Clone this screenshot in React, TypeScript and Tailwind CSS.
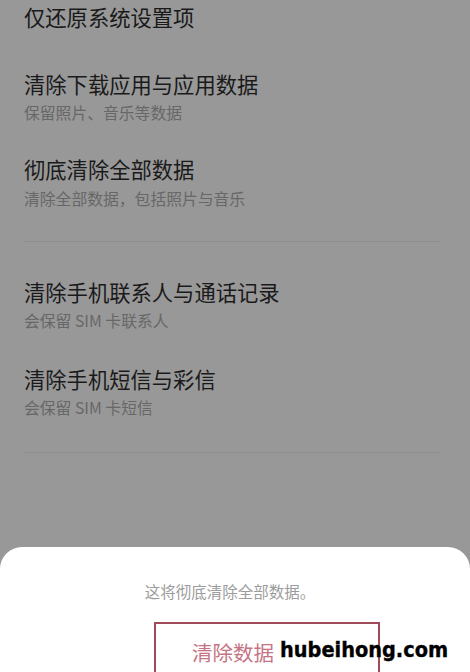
import React from "react";

const cjk = { fontFamily: '"Noto Sans CJK SC", "Noto Sans", sans-serif' };

function Item({ title, sub, mt, subMt = 5 }: { title: string; sub?: string; mt: number; subMt?: number }) {
  return (
    <div style={{ marginTop: mt }}>
      <div className="text-[21.3px] leading-[28px] text-[#1a1a1a] whitespace-nowrap">{title}</div>
      {sub && (
        <div className="text-[15.8px] leading-[20px] text-[#676767] whitespace-nowrap" style={{ marginTop: subMt }}>
          {sub}
        </div>
      )}
    </div>
  );
}

export default function App() {
  return (
    <div className="relative w-[470px] h-[672px] overflow-hidden bg-[#989898] flex flex-col" style={cjk}>
      <div className="flex-1 pl-[24px] pr-[30px] pt-[3px]">
        <Item title="仅还原系统设置项" mt={0} />
        <Item title="清除下载应用与应用数据" sub="保留照片、音乐等数据" mt={39} />
        <Item title="彻底清除全部数据" sub="清除全部数据，包括照片与音乐" mt={32} subMt={6} />
        <div className="mt-[32px] h-px bg-[#8d8d8d]" />
        <Item title="清除手机联系人与通话记录" sub="会保留 SIM 卡联系人" mt={36} />
        <Item title="清除手机短信与彩信" sub="会保留 SIM 卡短信" mt={34} />
        <div className="mt-[34px] h-px bg-[#8d8d8d]" />
      </div>
      <div className="h-[125px] shrink-0 bg-white rounded-t-[22px] pt-[34px] overflow-hidden">
        <div className="text-center pr-[10px] text-[15.5px] leading-[20px] text-[#9c9c9c]">这将彻底清除全部数据。</div>
        <div className="ml-[154px] mt-[21px] w-[226px] h-[80px] border-2 border-[#a04a5a] pl-[36px] pt-[14px]">
          <div className="text-[20.5px] leading-[28px] text-[#c47584] whitespace-nowrap">清除数据</div>
        </div>
      </div>
      <div
        className="absolute left-[280px] top-[636px] text-[21.5px] leading-[28px] font-bold text-black whitespace-nowrap [-webkit-text-stroke:0.35px_black]"
        style={{ fontFamily: '"DejaVu Sans Condensed", "DejaVu Sans", sans-serif' }}
      >
        hubeihong.com
      </div>
    </div>
  );
}
